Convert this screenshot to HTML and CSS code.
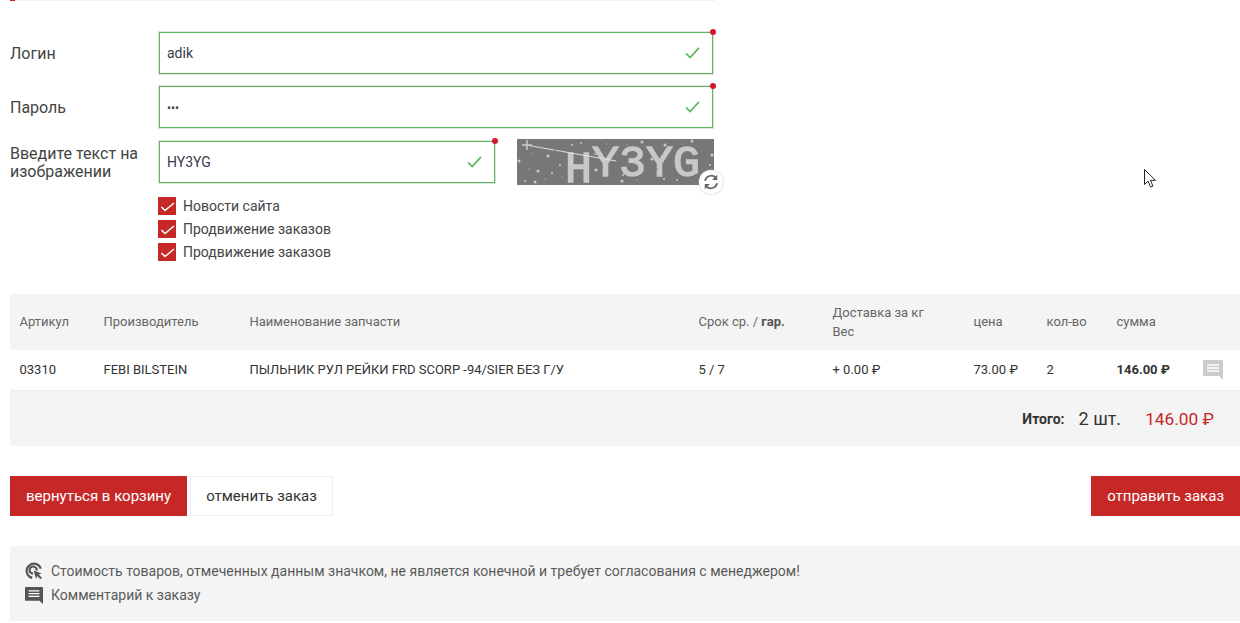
FILE: index.html
```html
<!DOCTYPE html>
<html lang="ru">
<head>
<meta charset="utf-8"/>
<title>Оформление заказа</title>
<link rel="stylesheet" href="styles.css">
</head>
<body>
<div class="topline"><span class="topline-mark"></span></div>

<form class="login-form">
  <div class="form-row">
    <label class="form-label">Логин</label>
    <div class="field field-wide">
      <span class="field-value">adik</span>
      <svg class="field-ok" viewBox="0 0 16 13"><path d="M1 7l4.5 4.5L15 1"/></svg>
    </div>
  </div>
  <div class="form-row">
    <label class="form-label">Пароль</label>
    <div class="field field-wide">
      <span class="field-value field-pass">•••</span>
      <svg class="field-ok" viewBox="0 0 16 13"><path d="M1 7l4.5 4.5L15 1"/></svg>
    </div>
  </div>
  <div class="form-row">
    <label class="form-label form-label-two">Введите текст на изображении</label>
    <div class="field field-short">
      <span class="field-value">HY3YG</span>
      <svg class="field-ok" viewBox="0 0 16 13"><path d="M1 7l4.5 4.5L15 1"/></svg>
    </div>
    <div class="captcha">
      <svg class="captcha-pic" viewBox="0 0 197 46">
        <rect width="197" height="46" fill="#777"/>
        <text class="captcha-text" x="48" y="38"><tspan y="43">H</tspan><tspan y="37">Y3YG</tspan></text>
        <path d="M9 6l90 16" stroke="#ddd" stroke-width="1.2"/>
        <path d="M10 1v10M5 6h10" stroke="#ccc" stroke-width="1.5"/>
        <g fill="#c9c9c9">
          <circle cx="31" cy="17" r="1.5"/><circle cx="2" cy="22" r="1.5"/><circle cx="21" cy="32" r="1.5"/>
          <circle cx="35" cy="34" r="1"/><circle cx="18" cy="43" r="1.5"/><circle cx="8" cy="42" r="1"/>
          <circle cx="43" cy="26" r="1"/><circle cx="55" cy="6" r="1"/><circle cx="64" cy="4" r="1"/>
          <circle cx="79" cy="31" r="1.5"/><circle cx="125" cy="3" r="1.5"/><circle cx="135" cy="20" r="1.5"/>
          <circle cx="105" cy="42" r="1.5"/><circle cx="106" cy="36" r="1"/><circle cx="148" cy="6" r="1.5"/>
          <circle cx="147" cy="40" r="1"/><circle cx="175" cy="2" r="1.5"/><circle cx="195" cy="16" r="1.5"/>
          <circle cx="193" cy="26" r="1"/><circle cx="78" cy="15" r="1"/><circle cx="160" cy="41" r="1"/>
        </g>
        <g fill="#8f8f8f">
          <circle cx="15" cy="15" r="1"/><circle cx="25" cy="8" r="1"/><circle cx="38" cy="11" r="1"/>
          <circle cx="12" cy="30" r="1"/><circle cx="28" cy="40" r="1"/><circle cx="45" cy="38" r="1"/>
          <circle cx="90" cy="5" r="1"/><circle cx="110" cy="6" r="1"/><circle cx="140" cy="30" r="1"/>
          <circle cx="165" cy="5" r="1"/><circle cx="185" cy="42" r="1"/><circle cx="120" cy="41" r="1"/>
        </g>
      </svg>
      <span class="captcha-refresh">
        <svg viewBox="2 2 20 20"><path d="M4.5 10.5A8 8 0 0 1 18 6.5M19.5 13.5A8 8 0 0 1 6 17.5"/><path class="arrow" d="M19.8 3v6.5h-6.5zM4.2 21v-6.5h6.5z"/></svg>
      </span>
    </div>
  </div>
  <div class="checks">
    <label class="check"><span class="check-box"><svg viewBox="0 0 18 18"><path d="M3.5 10l3.5 3.5L16 6"/></svg></span>Новости сайта</label>
    <label class="check"><span class="check-box"><svg viewBox="0 0 18 18"><path d="M3.5 10l3.5 3.5L16 6"/></svg></span>Продвижение заказов</label>
    <label class="check"><span class="check-box"><svg viewBox="0 0 18 18"><path d="M3.5 10l3.5 3.5L16 6"/></svg></span>Продвижение заказов</label>
  </div>
</form>

<table class="order">
  <thead>
    <tr>
      <th class="col-art">Артикул</th>
      <th class="col-brand">Производитель</th>
      <th class="col-name">Наименование запчасти</th>
      <th class="col-term">Срок ср. / <b>гар.</b></th>
      <th class="col-ship">Доставка за кг<br>Вес</th>
      <th class="col-price">цена</th>
      <th class="col-qty">кол-во</th>
      <th class="col-sum">сумма</th>
      <th class="col-note"></th>
    </tr>
  </thead>
  <tbody>
    <tr>
      <td>03310</td>
      <td>FEBI BILSTEIN</td>
      <td>ПЫЛЬНИК РУЛ РЕЙКИ FRD SCORP -94/SIER БЕЗ Г/У</td>
      <td>5 / 7</td>
      <td>+ 0.00 ₽</td>
      <td>73.00 ₽</td>
      <td>2</td>
      <td><b>146.00 ₽</b></td>
      <td><svg class="note-icon" viewBox="0 0 20 20"><path d="M1 0h18a1 1 0 0 1 1 1v19l-4-4H1a1 1 0 0 1-1-1V1a1 1 0 0 1 1-1z"/><path class="note-lines" d="M4 5h12M4 8h12M4 11h12"/></svg></td>
    </tr>
  </tbody>
</table>
<div class="total">
  <span class="total-label">Итого:</span>
  <span class="total-qty">2 шт.</span>
  <span class="total-sum">146.00 ₽</span>
</div>

<div class="actions">
  <a class="btn btn-red">вернуться в корзину</a>
  <a class="btn btn-white">отменить заказ</a>
  <a class="btn btn-red btn-send">отправить заказ</a>
</div>

<div class="legend">
  <p class="legend-row">
    <svg class="legend-icon" viewBox="0 0 20 20"><path class="ring" d="M17.5 7.5A8 8 0 1 0 8 17.6M13 9.5A4 4 0 1 0 9 13"/><path d="M9.5 9.5l9 3.2-3.3 1.3 3.6 3.6-1.6 1.6-3.6-3.6-1.2 3.4z"/></svg>
    Стоимость товаров, отмеченных данным значком, не является конечной и требует согласования с менеджером!
  </p>
  <p class="legend-row">
    <svg class="legend-icon" viewBox="0 0 20 20"><path d="M1 1h18a1 1 0 0 1 1 1v18l-4-3.5H1a1 1 0 0 1-1-1V2a1 1 0 0 1 1-1z"/><path class="note-lines" d="M4 5.5h12M4 8.5h12M4 11.5h12"/></svg>
    Комментарий к заказу
  </p>
</div>

<svg class="cursor" viewBox="0 0 13 19"><path d="M.5.5v15l3.6-3.4 2.4 6 2.4-1-2.4-5.8h5z"/></svg>
</body>
</html>
```

FILE: styles.css
```css
* {
  box-sizing: border-box;
}

html, body {
  margin: 0;
  height: 623px;
  overflow: hidden;
}

body {
  position: relative;
  padding-left: 10px;
  background: #fff;
  font-family: Roboto, "Liberation Sans", sans-serif;
  font-size: 13px;
  color: #333;
}

.topline {
  width: 705px;
  height: 1px;
  background: #f0f0f0;
}
.topline-mark {
  display: block;
  width: 5px;
  height: 1px;
  background: #c62828;
}

/* form */
.login-form {
  padding-top: 31px;
}
.form-row {
  display: flex;
  align-items: center;
  margin-bottom: 12.4px;
}
.form-label {
  width: 148px;
  padding-top: 1px;
  font-size: 16px;
  line-height: 18px;
  color: #444;
}
.form-label-two {
  padding-top: 3px;
  padding-right: 5px;
}
.field {
  position: relative;
  display: flex;
  align-items: center;
  justify-content: space-between;
  height: 42px;
  margin-left: 1px;
  padding: 0 12px 0 7px;
  border: 1px solid #5cb85c;
  box-shadow: 0 0 0 1px #e2e2e2;
  font-size: 14px;
}
.field::after {
  content: "";
  position: absolute;
  top: -4px;
  right: -4px;
  width: 6px;
  height: 6px;
  border-radius: 50%;
  background: #d9142e;
}
.field-wide {
  width: 554px;
}
.field-short {
  width: 336px;
}
.field-value {
  color: #3a3a4a;
}
.field-pass {
  margin-top: 2px;
  font-size: 12px;
}
.field-ok {
  width: 15px;
  height: 12px;
  fill: none;
  stroke: #5cb85c;
  stroke-width: 1.8;
}

.captcha {
  position: relative;
  align-self: flex-start;
  width: 197px;
  height: 46px;
  margin: -2px 0 -2px 22px;
}
.captcha-pic {
  display: block;
  width: 197px;
  height: 46px;
  overflow: visible;
  filter: blur(0.5px);
}
.captcha-text {
  font-family: "Liberation Mono", monospace;
  font-size: 45px;
  fill: #c8c8c8;
  stroke: #c8c8c8;
  stroke-width: 1.4;
}
.captcha-refresh {
  position: absolute;
  right: -9px;
  bottom: -9px;
  width: 24px;
  height: 24px;
  padding: 4px;
  border-radius: 50%;
  background: #fff;
  box-shadow: 0 0 2px #bbb;
}
.captcha-refresh svg {
  display: block;
  fill: none;
  stroke: #666;
  stroke-width: 2.2;
}
.captcha-refresh .arrow {
  fill: #666;
  stroke: none;
}

.checks {
  margin: 14px 0 0 148px;
}
.check {
  display: flex;
  align-items: center;
  height: 18px;
  margin-bottom: 5px;
  font-size: 14px;
  color: #444;
}
.check-box {
  width: 18px;
  height: 18px;
  margin-right: 7px;
  background: #c62828;
}
.check-box svg {
  display: block;
  fill: none;
  stroke: #fff;
  stroke-width: 1.5;
}

/* table */
.order {
  width: 1230px;
  margin-top: 33px;
  border-collapse: collapse;
  table-layout: fixed;
}
.order th {
  height: 56px;
  padding: 0 0 0 9.5px;
  background: #f4f4f4;
  text-align: left;
  font-weight: 400;
  line-height: 19px;
  color: #666;
}
.order th b {
  font-weight: 700;
  color: #555;
}
.order td {
  height: 41px;
  padding: 0 0 1px 9.5px;
  border-bottom: 1px solid #eee;
  color: #333;
}
.col-art { width: 84px; }
.col-brand { width: 146px; }
.col-name { width: 449px; }
.col-term { width: 134px; }
.col-ship { width: 141px; }
.col-price { width: 73px; }
.col-qty { width: 70px; }
.col-sum { width: 86px; }
.note-icon {
  display: block;
  width: 20px;
  height: 20px;
  fill: #ccc;
}
.note-lines {
  fill: none;
  stroke: #fff;
  stroke-width: 1.4;
}

.total {
  display: flex;
  align-items: center;
  justify-content: flex-end;
  width: 1230px;
  height: 55px;
  padding: 0 26px 0 0;
  background: #f4f4f4;
}
.total-label {
  font-size: 14px;
  font-weight: 700;
  color: #333;
}
.total-qty {
  margin-left: 14px;
  font-size: 18px;
  color: #333;
}
.total-sum {
  margin-left: 24px;
  font-size: 17.3px;
  color: #c62828;
}

/* buttons */
.actions {
  display: flex;
  width: 1230px;
  margin-top: 30px;
}
.btn {
  display: flex;
  align-items: center;
  height: 40px;
  padding: 0 16px;
  font-size: 15px;
}
.btn-red {
  background: #c62828;
  color: #fff;
}
.btn-white {
  margin-left: 3px;
  padding: 0 15px;
  border: 1px solid #eee;
  color: #333;
}
.btn-send {
  margin-left: auto;
}

.legend {
  width: 1230px;
  height: 75px;
  margin-top: 30px;
  padding: 13px 15px 0;
  background: #f4f4f4;
}
.legend-row {
  display: flex;
  align-items: center;
  height: 24px;
  margin: 0;
  font-size: 14px;
  color: #5a5a5a;
}
.legend-icon {
  width: 18px;
  height: 18px;
  margin-right: 8px;
  fill: #555;
}
.legend-icon .ring {
  fill: none;
  stroke: #555;
  stroke-width: 2.4;
}

/* screen pointer caught in the shot */
.cursor {
  position: absolute;
  left: 1144px;
  top: 169px;
  width: 13px;
  height: 19px;
  fill: #fff;
  stroke: #223;
  stroke-width: 1;
}
```
